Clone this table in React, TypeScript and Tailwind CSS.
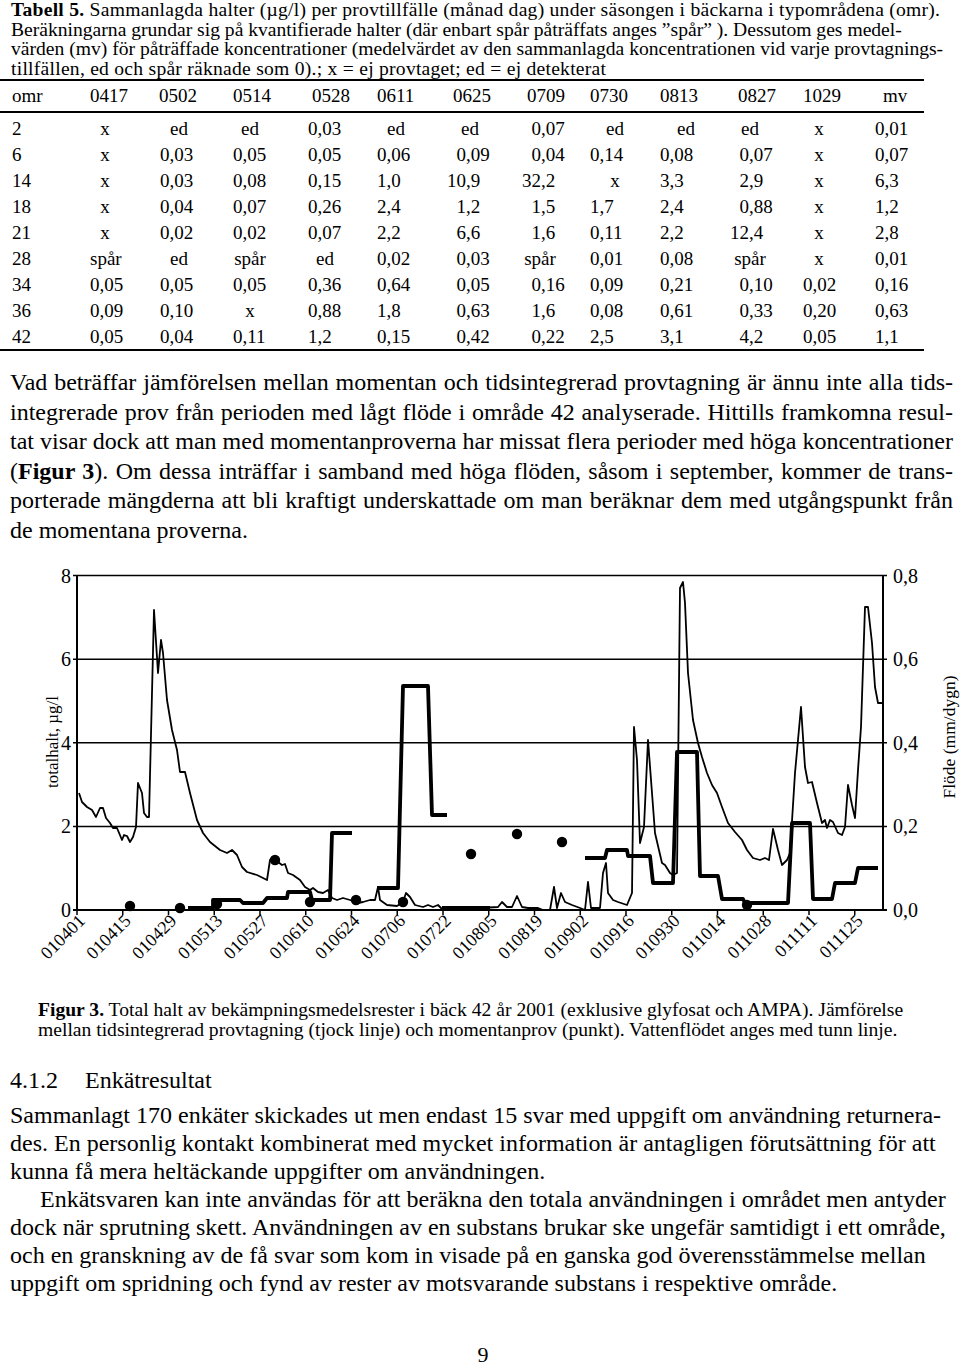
import React from "react";

type Col = { intW: string; boxW: string; head: string; label: string };

const cols: Col[] = [
  { intW: "w-[9.5px]", boxW: "w-[30px]", head: "pl-0", label: "0417" },
  { intW: "w-[10.5px]", boxW: "w-[40px]", head: "pl-0", label: "0502" },
  { intW: "w-[9.5px]", boxW: "w-[34px]", head: "pl-0", label: "0514" },
  { intW: "w-[9.5px]", boxW: "w-[34px]", head: "pl-[4px]", label: "0528" },
  { intW: "w-[9.5px]", boxW: "w-[38px]", head: "pl-0", label: "0611" },
  { intW: "w-[19px]", boxW: "w-[46px]", head: "pl-[6px]", label: "0625" },
  { intW: "w-[21px]", boxW: "w-[40px]", head: "pl-[7px]", label: "0709" },
  { intW: "w-[9.5px]", boxW: "w-[50px]", head: "pl-0", label: "0730" },
  { intW: "w-[9.5px]", boxW: "w-[52px]", head: "pl-0", label: "0813" },
  { intW: "w-[19px]", boxW: "w-[40px]", head: "pl-[8px]", label: "0827" },
  { intW: "w-[9.5px]", boxW: "w-[32px]", head: "pl-0", label: "1029" },
  { intW: "w-[9.5px]", boxW: "w-[32px]", head: "pl-[8px]", label: "mv" },
];

const rows: string[][] = [
  ["2", "x", "ed", "ed", "0,03", "ed", "ed", "0,07", "ed", "ed", "ed", "x", "0,01"],
  ["6", "x", "0,03", "0,05", "0,05", "0,06", "0,09", "0,04", "0,14", "0,08", "0,07", "x", "0,07"],
  ["14", "x", "0,03", "0,08", "0,15", "1,0", "10,9", "32,2", "x", "3,3", "2,9", "x", "6,3"],
  ["18", "x", "0,04", "0,07", "0,26", "2,4", "1,2", "1,5", "1,7", "2,4", "0,88", "x", "1,2"],
  ["21", "x", "0,02", "0,02", "0,07", "2,2", "6,6", "1,6", "0,11", "2,2", "12,4", "x", "2,8"],
  ["28", "spår", "ed", "spår", "ed", "0,02", "0,03", "spår", "0,01", "0,08", "spår", "x", "0,01"],
  ["34", "0,05", "0,05", "0,05", "0,36", "0,64", "0,05", "0,16", "0,09", "0,21", "0,10", "0,02", "0,16"],
  ["36", "0,09", "0,10", "x", "0,88", "1,8", "0,63", "1,6", "0,08", "0,61", "0,33", "0,20", "0,63"],
  ["42", "0,05", "0,04", "0,11", "1,2", "0,15", "0,42", "0,22", "2,5", "3,1", "4,2", "0,05", "1,1"],
];

const grid =
  "grid grid-cols-[78px_69px_74px_75px_69px_70px_73px_70px_70px_70px_73px_72px_50px] pl-[12px]";

function Cell({ v, col }: { v: string; col: Col }) {
  if (v.includes(",")) {
    const [a, b] = v.split(",");
    return (
      <div className="flex">
        <span className={`inline-block text-right ${col.intW}`}>{a}</span>
        <span>,{b}</span>
      </div>
    );
  }
  return <span className={`inline-block text-center ${col.boxW}`}>{v}</span>;
}

const thin =
  "M79,793 L82,802 L87,807 L92,810 L96,817 L100,808 L103,808 L106,818 L110,823 L113,828 L117,828 L122,840 L124,835 L127,836 L130,842 L133,837 L136,827 L138,783 L142,793 L144,813 L147,817 L149,817 L154,610 L158,673 L161,640 L163,653 L167,700 L172,730 L177,750 L180,772 L185,772 L190,793 L197,820 L203,833 L210,842 L220,850 L227,853 L232,850 L237,855 L242,867 L247,872 L257,875 L263,878 L267,880 L270,860 L273,857 L278,862 L282,865 L285,864 L288,873 L293,875 L300,880 L305,887 L310,890 L313,888 L318,892 L323,893 L328,890 L332,898 L337,900 L343,898 L350,900 L358,903 L363,902 L370,900 L375,900 L378,887 L380,900 L387,905 L397,906 L403,902 L406,893 L410,897 L415,905 L423,907 L428,905 L433,907 L438,905 L442,909 L460,909 L480,908 L498,907 L502,902 L507,907 L512,907 L517,896 L522,907 L528,908 L538,908 L543,910 L550,910 L554,887 L557,908 L561,893 L565,902 L572,905 L580,908 L585,910 L588,882 L591,908 L600,908 L603,873 L606,863 L608,893 L613,900 L618,902 L627,905 L632,893 L634,727 L637,760 L640,843 L644,827 L648,740 L652,793 L655,833 L662,863 L665,865 L670,873 L673,875 L677,873 L680,588 L683,582 L685,603 L688,673 L693,720 L698,743 L702,757 L707,773 L712,785 L717,793 L722,807 L728,823 L735,832 L742,840 L747,850 L753,858 L760,860 L765,858 L769,860 L773,829 L778,850 L782,865 L787,860 L790,853 L795,773 L801,707 L805,767 L808,783 L812,782 L817,803 L822,823 L825,820 L827,828 L830,820 L833,822 L838,833 L842,835 L845,827 L848,785 L852,805 L855,818 L858,770 L861,727 L865,607 L868,607 L872,643 L875,687 L878,703 L882,703";

const thick = [
  "M188,908 L213,908 L213,900 L240,900 L243,903 L263,903 L267,898 L287,898 L288,892 L310,892 L312,900 L330,900 L332,833 L352,833",
  "M377,888 L398,888 L403,686 L428,686 L432,815 L447,815",
  "M442,908 L490,908",
  "M585,858 L605,858 L607,850 L627,850 L628,856 L650,856 L653,883 L673,883 L677,752 L697,752 L700,876 L718,876 L722,899 L743,899 L745,903 L788,903 L792,823 L810,823 L813,899 L832,899 L835,883 L855,883 L858,868 L878,868",
];

const dots = [
  [130, 906], [180, 908], [217, 904], [275, 860], [310, 902], [356, 900],
  [403, 902], [471, 854], [517, 834], [562, 842], [747, 905],
];

const dates = [
  "010401", "010415", "010429", "010513", "010527", "010610", "010624", "010706", "010722",
  "010805", "010819", "010902", "010916", "010930", "011014", "011028", "011111", "011125",
];

const gy = [910, 826.4, 742.8, 659.2, 575.6];

function Chart() {
  return (
    <svg width={960} height={430} viewBox="0 555 960 430" className="block">
      <g fontFamily="'Liberation Serif', serif" fill="#000">
        {gy.map((y, i) => (
          <g key={y}>
            <line x1={73} x2={887} y1={y} y2={y} stroke="#000" strokeWidth={i === 0 ? 2 : 1.5} />
            <text x={71} y={y + 7} fontSize={20} textAnchor="end">{i * 2}</text>
            <text x={893} y={y + 7} fontSize={20}>{`0,${i * 2}`}</text>
          </g>
        ))}
        <line x1={77} x2={77} y1={575} y2={911} stroke="#000" strokeWidth={2} />
        <line x1={883} x2={883} y1={575} y2={911} stroke="#000" strokeWidth={2} />
        {dates.map((d, i) => {
          const x = 77 + i * 45.75;
          return (
            <g key={d}>
              <line x1={x} x2={x} y1={910} y2={915} stroke="#000" strokeWidth={1.5} />
              <text
                x={x + 9}
                y={922}
                fontSize={18}
                textAnchor="end"
                transform={`rotate(-45 ${x + 9} 922)`}
              >
                {d}
              </text>
            </g>
          );
        })}
        <text x={58} y={742} fontSize={17} textAnchor="middle" transform="rotate(-90 58 742)">
          totalhalt, µg/l
        </text>
        <text x={955} y={737} fontSize={17.5} textAnchor="middle" transform="rotate(-90 955 737)">
          Flöde (mm/dygn)
        </text>
        <path d={thin} fill="none" stroke="#000" strokeWidth={1.8} strokeLinejoin="round" />
        {thick.map((d) => (
          <path key={d} d={d} fill="none" stroke="#000" strokeWidth={3.8} strokeLinejoin="round" />
        ))}
        {dots.map(([x, y]) => (
          <circle key={`${x}-${y}`} cx={x} cy={y} r={5.2} />
        ))}
      </g>
    </svg>
  );
}

const bodyLines = [
  "Vad beträffar jämförelsen mellan momentan och tidsintegrerad provtagning är ännu inte alla tids-",
  "integrerade prov från perioden med lågt flöde i område 42 analyserade. Hittills framkomna resul-",
  "tat visar dock att man med momentanproverna har missat flera perioder med höga koncentrationer",
];

export default function App() {
  return (
    <div className="flex h-[1366px] w-[960px] flex-col bg-white font-['Liberation_Serif',serif] text-black">
      <div className="pl-[11px] text-[19.6px] leading-[19.5px]">
        <div className="tracking-[0.25px]">
          <b>Tabell 5.</b> Sammanlagda halter (µg/l) per provtillfälle (månad dag) under säsongen i
          bäckarna i typområdena (omr).
        </div>
        <div>
          Beräkningarna grundar sig på kvantifierade halter (där enbart spår påträffats anges
          ”spår” ). Dessutom ges medel-
        </div>
        <div>
          värden (mv) för påträffade koncentrationer (medelvärdet av den sammanlagda
          koncentrationen vid varje provtagnings-
        </div>
        <div className="tracking-[0.25px]">
          tillfällen, ed och spår räknade som 0).; x = ej provtaget; ed = ej detekterat
        </div>
      </div>

      <div className="mt-[1px] w-[924px] border-y-2 border-black text-[19px]">
        <div className={`${grid} h-[30px] items-center`}>
          <span>omr</span>
          {cols.map((c) => (
            <span key={c.label} className={c.head}>
              {c.label}
            </span>
          ))}
        </div>
      </div>
      <div className="w-[924px] border-b-2 border-black pt-[2px] text-[19px]">
        {rows.map((r) => (
          <div key={r[0]} className={`${grid} h-[26px] items-center`}>
            <span>{r[0]}</span>
            {r.slice(1).map((v, i) => (
              <Cell key={i} v={v} col={cols[i]} />
            ))}
          </div>
        ))}
      </div>

      <div className="mt-[17px] w-[953px] pl-[10px] text-[24px] leading-[29.6px]">
        {bodyLines.map((t) => (
          <div key={t} className="whitespace-nowrap text-justify [text-align-last:justify]">
            {t}
          </div>
        ))}
        <div className="whitespace-nowrap text-justify [text-align-last:justify]">
          (<b>Figur 3</b>). Om dessa inträffar i samband med höga flöden, såsom i september, kommer de trans-
        </div>
        <div className="whitespace-nowrap text-justify [text-align-last:justify]">
          porterade mängderna att bli kraftigt underskattade om man beräknar dem med utgångspunkt från
        </div>
        <div>de momentana proverna.</div>
      </div>

      <div className="mt-[9px]">
        <Chart />
      </div>

      <div className="mt-[15px] pl-[38px] text-[19.6px] leading-[20px]">
        <div>
          <b>Figur 3.</b> Total halt av bekämpningsmedelsrester i bäck 42 år 2001 (exklusive
          glyfosat och AMPA). Jämförelse
        </div>
        <div>
          mellan tidsintegrerad provtagning (tjock linje) och momentanprov (punkt). Vattenflödet
          anges med tunn linje.
        </div>
      </div>

      <div className="mt-[26px] flex pl-[10px] text-[24px] leading-[28px]">
        <span className="w-[75px]">4.1.2</span>
        <span>Enkätresultat</span>
      </div>

      <div className="mt-[7px] pl-[10px] text-[24px] leading-[28px]">
        <div>
          Sammanlagt 170 enkäter skickades ut men endast 15 svar med uppgift om användning returnera-
        </div>
        <div>
          des. En personlig kontakt kombinerat med mycket information är antagligen förutsättning för att
        </div>
        <div>kunna få mera heltäckande uppgifter om användningen.</div>
        <div className="pl-[30px]">
          Enkätsvaren kan inte användas för att beräkna den totala användningen i området men antyder
        </div>
        <div>
          dock när sprutning skett. Användningen av en substans brukar ske ungefär samtidigt i ett område,
        </div>
        <div>
          och en granskning av de få svar som kom in visade på en ganska god överensstämmelse mellan
        </div>
        <div>uppgift om spridning och fynd av rester av motsvarande substans i respektive område.</div>
      </div>

      <div className="mt-auto h-[22px] pl-[6px] text-center text-[22px] leading-[22px]">9</div>
    </div>
  );
}
